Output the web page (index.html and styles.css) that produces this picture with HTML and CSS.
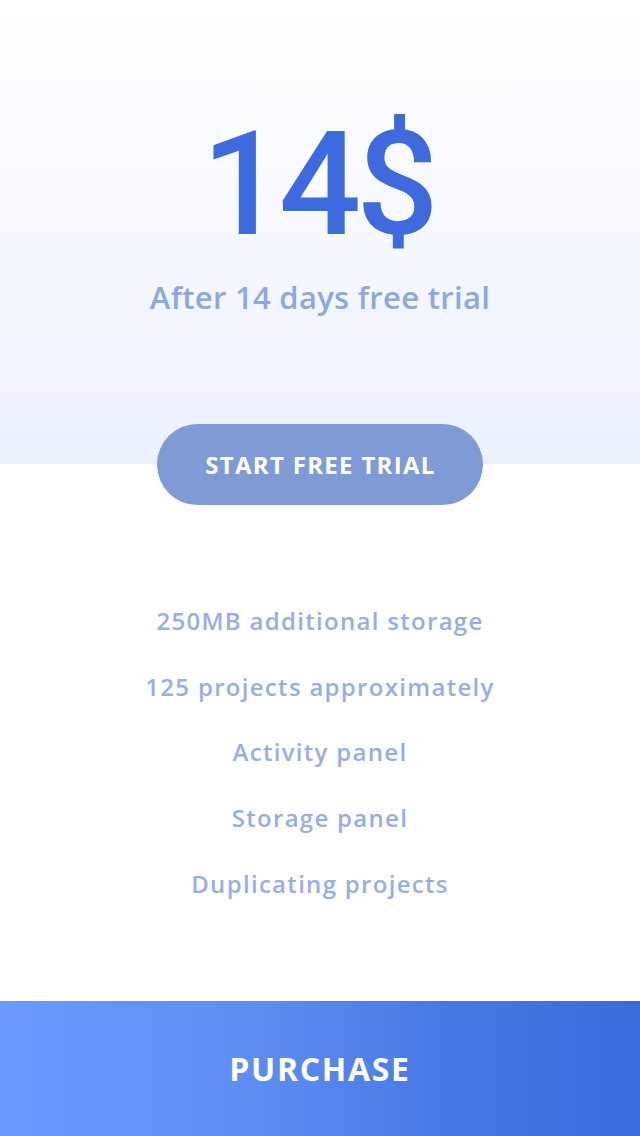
FILE: index.html
```html
<!DOCTYPE html>
<html lang="en">
<head>
<meta charset="utf-8">
<title>Pricing</title>
<link rel="stylesheet" href="styles.css">
</head>
<body>
<main class="page">
  <section class="hero">
    <div class="price">14$</div>
    <p class="note">After 14 days free trial</p>
  </section>
  <div class="cta-wrap">
    <button class="cta">START FREE TRIAL</button>
  </div>
  <ul class="features">
    <li>250MB additional storage</li>
    <li>125 projects approximately</li>
    <li>Activity panel</li>
    <li>Storage panel</li>
    <li>Duplicating projects</li>
  </ul>
  <button class="purchase">PURCHASE</button>
</main>
</body>
</html>
```

FILE: styles.css
```css
* { box-sizing: border-box; }
html, body { margin: 0; padding: 0; }
body {
  width: 640px;
  height: 1136px;
  background: #ffffff;
  font-family: "Open Sans", sans-serif;
  overflow: hidden;
}
.page {
  height: 1136px;
  display: flex;
  flex-direction: column;
}
.hero {
  height: 464px;
  flex: none;
  background: linear-gradient(to bottom, #ffffff 0%, #fcfdff 15%, #f7f9fe 45%, #ebf1fd 100%);
  display: flex;
  flex-direction: column;
  align-items: center;
  padding-top: 112px;
}
.price {
  font-family: Roboto, sans-serif;
  font-weight: 500;
  font-size: 145px;
  line-height: 145px;
  color: #3d6bdd;
  letter-spacing: -5px;
  margin-right: 5px;
}
.note {
  margin: 22px 0 0;
  font-family: "Open Sans", sans-serif;
  font-weight: 600;
  font-size: 31px;
  line-height: 36px;
  letter-spacing: 0.3px;
  color: #8ca8e0;
}
.cta-wrap {
  display: flex;
  justify-content: center;
  margin-top: -40px;
}
.cta {
  width: 326px;
  height: 81px;
  border: none;
  border-radius: 41px;
  background: #7f9bd6;
  color: #ffffff;
  font-family: "Open Sans", sans-serif;
  font-weight: 700;
  font-size: 24px;
  letter-spacing: 1.3px;
  padding: 0 0 0 1px;
}
.features {
  list-style: none;
  margin: 83px 0 0;
  padding: 0;
  text-align: center;
  font-family: "Open Sans", sans-serif;
  font-weight: 600;
  font-size: 24px;
  line-height: 65.7px;
  letter-spacing: 1.3px;
  color: #97aee2;
}
.purchase {
  margin-top: auto;
  height: 135px;
  width: 100%;
  border: none;
  background: linear-gradient(to right, #6b9bff 0%, #5d8cf2 40%, #4878e4 70%, #3b6bdb 100%);
  color: #ffffff;
  font-family: "Open Sans", sans-serif;
  font-weight: 700;
  font-size: 32px;
  letter-spacing: 1.7px;
  padding: 0;
}
```
